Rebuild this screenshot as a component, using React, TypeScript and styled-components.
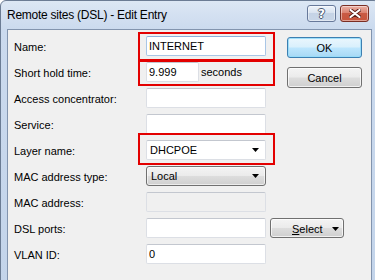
import React from 'react'
import styled, { createGlobalStyle } from 'styled-components'

const GlobalStyle = createGlobalStyle`
  html, body {
    margin: 0;
    padding: 0;
    background: #ffffff;
    overflow: hidden;
  }
  body {
    font-family: "Liberation Sans", Arial, sans-serif;
    font-size: 11px;
    color: #000;
  }
`

const Window = styled.div`
  box-sizing: border-box;
  width: 380px;
  height: 290px;
  border: 1px solid #6b7c94;
  border-radius: 6px 6px 0 0;
  background: linear-gradient(#dce7f4, #cbdaee 28px, #c3d4ea);
  padding: 0 7px 7px 6px;
  display: flex;
  flex-direction: column;
`

const TitleBar = styled.div`
  height: 28px;
  display: flex;
  align-items: flex-start;
  padding: 0 3px 0 0;
`

const Title = styled.div`
  flex: 1;
  padding-top: 7px;
  font-size: 12px;
  line-height: 14px;
  letter-spacing: -0.25px;
  color: #000;
`

const CaptionButtons = styled.div`
  display: flex;
  gap: 4px;
  margin-top: 4px;
`

const CaptionButton = styled.div<{ $close?: boolean }>`
  box-sizing: border-box;
  width: 29px;
  height: 17px;
  border-radius: 3px;
  border: 1px solid ${(p) => (p.$close ? '#7a2e24' : '#67799a')};
  background: ${(p) =>
    p.$close
      ? 'linear-gradient(#eab0a4, #dc8371 45%, #c95a44 50%, #c8553c)'
      : 'linear-gradient(#eef3fa, #d9e3f0 45%, #c5d3e6 50%, #c8d6e8)'};
  box-shadow: inset 0 0 0 1px rgba(255, 255, 255, 0.45);
  display: flex;
  align-items: center;
  justify-content: center;
`

const HelpGlyph = styled.span`
  font-family: "DejaVu Sans", sans-serif;
  font-weight: bold;
  font-size: 12px;
  line-height: 12px;
  color: #fff;
  text-shadow:
    -1px 0 #4a5a72, 1px 0 #4a5a72, 0 -1px #4a5a72, 0 1px #4a5a72;
`

const Client = styled.div`
  flex: 1;
  border: 1px solid #8294ae;
  background: #f0f0f0;
  padding: 6px 0 0 6px;
  display: grid;
  grid-template-columns: 132px 120px 1fr;
  grid-template-rows: repeat(9, 20px);
  row-gap: 6px;
  align-content: start;
`

const Label = styled.div`
  grid-column: 1;
  align-self: center;
  padding-top: 1px;
  white-space: nowrap;
`

const Field = styled.div`
  grid-column: 2;
  position: relative;
  display: flex;
  align-items: center;
  gap: 2px;
`

const TextBox = styled.input<{ $width?: number; $focused?: boolean; $disabled?: boolean }>`
  box-sizing: border-box;
  width: ${(p) => (p.$width ? `${p.$width}px` : '100%')};
  height: 20px;
  margin: 0;
  padding: 0 2px;
  font-family: "Liberation Sans", Arial, sans-serif;
  font-size: 11px;
  color: #000;
  outline: none;
  border-radius: 2px;
  border: 1px solid ${(p) => (p.$focused ? '#a9c6e6' : '#dcdfe5')};
  border-top-color: ${(p) => (p.$focused ? '#8fb0d8' : '#c3c7cf')};
  background: ${(p) => (p.$disabled ? '#f0f0f0' : '#fff')};
`

const Unit = styled.span`
  white-space: nowrap;
`

const Combo = styled.div<{ $button?: boolean }>`
  box-sizing: border-box;
  width: 100%;
  height: 20px;
  padding: 0 6px 0 ${(p) => (p.$button ? '4px' : '3px')};
  display: flex;
  align-items: center;
  justify-content: space-between;
  border-radius: ${(p) => (p.$button ? '3px' : '2px')};
  border: 1px solid ${(p) => (p.$button ? '#707070' : '#dcdfe5')};
  border-top-color: ${(p) => (p.$button ? '#707070' : '#c3c7cf')};
  background: ${(p) =>
    p.$button ? 'linear-gradient(#f4f4f4, #ebebeb 48%, #dddddd 52%, #cfcfcf)' : '#fff'};
  box-shadow: ${(p) => (p.$button ? 'inset 0 0 0 1px rgba(255,255,255,0.6)' : 'none')};
`

const Mark = styled.div<{ $top: number; $bottom: number }>`
  position: absolute;
  left: -8px;
  right: -9px;
  top: ${(p) => p.$top}px;
  bottom: ${(p) => p.$bottom}px;
  border: 2px solid #e30000;
  pointer-events: none;
`

const ButtonColumn = styled.div`
  grid-column: 3;
  grid-row: 1 / span 3;
  display: flex;
  flex-direction: column;
  gap: 9px;
  padding: 1px 0 0 21px;
`

const PushButton = styled.div<{ $default?: boolean }>`
  box-sizing: border-box;
  width: 75px;
  height: 21px;
  border-radius: 3px;
  border: 1px solid ${(p) => (p.$default ? '#3c7fb1' : '#707070')};
  background: ${(p) =>
    p.$default
      ? 'linear-gradient(#eaf6fd, #d9f0fc 48%, #bee6fd 52%, #a7d9f5)'
      : 'linear-gradient(#f4f4f4, #ebebeb 48%, #dddddd 52%, #cfcfcf)'};
  box-shadow: inset 0 0 0 1px ${(p) => (p.$default ? 'rgba(150,220,250,0.9)' : 'rgba(255,255,255,0.7)')};
  display: flex;
  align-items: center;
  justify-content: center;
  padding-top: 1px;
`

const SelectButton = styled.div`
  grid-column: 3;
  grid-row: 8;
  box-sizing: border-box;
  width: 74px;
  height: 20px;
  margin-left: 4px;
  border-radius: 3px;
  border: 1px solid #707070;
  background: linear-gradient(#f4f4f4, #ebebeb 48%, #dddddd 52%, #cfcfcf);
  box-shadow: inset 0 0 0 1px rgba(255, 255, 255, 0.7);
  display: flex;
  align-items: center;
  gap: 9px;
  padding: 1px 0 0 21px;
`

const Arrow = () => (
  <svg width="7" height="4" viewBox="0 0 7 4">
    <path d="M0 0h7L3.5 4z" fill="#000" />
  </svg>
)

const CloseGlyph = () => (
  <svg width="12" height="9" viewBox="0 0 12 9">
    <path d="M1.5 1l9 7M10.5 1l-9 7" stroke="#5a1f18" strokeWidth="4" strokeLinecap="round" />
    <path d="M1.5 1l9 7M10.5 1l-9 7" stroke="#fff" strokeWidth="2.2" strokeLinecap="round" />
  </svg>
)

export default function App() {
  return (
    <>
      <GlobalStyle />
      <Window>
        <TitleBar>
          <Title>Remote sites (DSL) - Edit Entry</Title>
          <CaptionButtons>
            <CaptionButton>
              <HelpGlyph>?</HelpGlyph>
            </CaptionButton>
            <CaptionButton $close>
              <CloseGlyph />
            </CaptionButton>
          </CaptionButtons>
        </TitleBar>
        <Client>
          <Label>Name:</Label>
          <Field>
            <TextBox readOnly defaultValue="INTERNET" $focused />
            <Mark $top={-4} $bottom={-5} />
          </Field>

          <Label>Short hold time:</Label>
          <Field>
            <TextBox readOnly defaultValue="9.999" $width={53} />
            <Unit>seconds</Unit>
            <Mark $top={-2} $bottom={-4} />
          </Field>

          <Label>Access concentrator:</Label>
          <Field>
            <TextBox readOnly defaultValue="" />
          </Field>

          <Label>Service:</Label>
          <Field>
            <TextBox readOnly defaultValue="" />
          </Field>

          <Label>Layer name:</Label>
          <Field>
            <Combo>
              <span>DHCPOE</span>
              <Arrow />
            </Combo>
            <Mark $top={-7} $bottom={-5} />
          </Field>

          <Label>MAC address type:</Label>
          <Field>
            <Combo $button>
              <span>Local</span>
              <Arrow />
            </Combo>
          </Field>

          <Label>MAC address:</Label>
          <Field>
            <TextBox readOnly defaultValue="" $disabled />
          </Field>

          <Label>DSL ports:</Label>
          <Field>
            <TextBox readOnly defaultValue="" />
          </Field>
          <SelectButton>
            <span>
              <u>S</u>elect
            </span>
            <Arrow />
          </SelectButton>

          <Label>VLAN ID:</Label>
          <Field>
            <TextBox readOnly defaultValue="0" />
          </Field>

          <ButtonColumn>
            <PushButton $default>OK</PushButton>
            <PushButton>Cancel</PushButton>
          </ButtonColumn>
        </Client>
      </Window>
    </>
  )
}
